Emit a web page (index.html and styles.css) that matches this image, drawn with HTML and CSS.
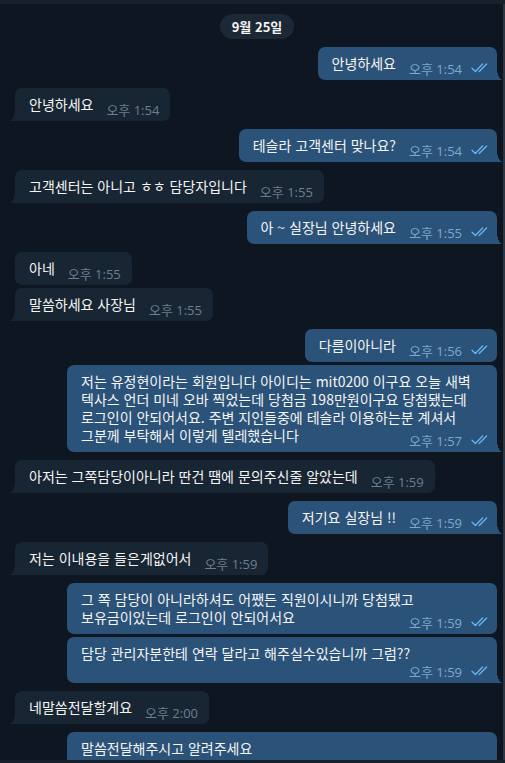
FILE: index.html
```html
<!DOCTYPE html>
<html lang="ko">
<head>
    <meta charset="UTF-8">
    <meta name="viewport" content="width=device-width, initial-scale=1.0">
    <title>Telegram</title>
    <link rel="stylesheet" href="styles.css">
</head>
<body>
    <div class="window">
        <div class="topbar"></div>
        <div class="chat">
            <div class="history">
                <div class="date-row"><span class="date">9월 25일</span></div>

                <div class="group out">
                    <div class="bubble tail">
                        <div class="text">안녕하세요<span class="pad"></span></div>
                        <div class="meta">오후 1:54<svg class="check" width="18" height="10" viewBox="0 0 18 10"><path d="M1 5.2l3.4 3.3L11.6 1M8.2 8.5L15.6 1"/></svg></div>
                    </div>
                </div>

                <div class="group in">
                    <div class="bubble tail">
                        <div class="text">안녕하세요<span class="pad"></span></div>
                        <div class="meta">오후 1:54</div>
                    </div>
                </div>

                <div class="group out">
                    <div class="bubble tail">
                        <div class="text">테슬라 고객센터 맞나요?<span class="pad"></span></div>
                        <div class="meta">오후 1:54<svg class="check" width="18" height="10" viewBox="0 0 18 10"><path d="M1 5.2l3.4 3.3L11.6 1M8.2 8.5L15.6 1"/></svg></div>
                    </div>
                </div>

                <div class="group in">
                    <div class="bubble tail">
                        <div class="text">고객센터는 아니고 ㅎㅎ 담당자입니다<span class="pad"></span></div>
                        <div class="meta">오후 1:55</div>
                    </div>
                </div>

                <div class="group out">
                    <div class="bubble tail">
                        <div class="text">아 ~ 실장님 안녕하세요<span class="pad"></span></div>
                        <div class="meta">오후 1:55<svg class="check" width="18" height="10" viewBox="0 0 18 10"><path d="M1 5.2l3.4 3.3L11.6 1M8.2 8.5L15.6 1"/></svg></div>
                    </div>
                </div>

                <div class="group in">
                    <div class="bubble">
                        <div class="text">아네<span class="pad"></span></div>
                        <div class="meta">오후 1:55</div>
                    </div>
                    <div class="bubble tail">
                        <div class="text">말씀하세요 사장님<span class="pad"></span></div>
                        <div class="meta">오후 1:55</div>
                    </div>
                </div>

                <div class="group out">
                    <div class="bubble">
                        <div class="text">다름이아니라<span class="pad"></span></div>
                        <div class="meta">오후 1:56<svg class="check" width="18" height="10" viewBox="0 0 18 10"><path d="M1 5.2l3.4 3.3L11.6 1M8.2 8.5L15.6 1"/></svg></div>
                    </div>
                    <div class="bubble tail full">
                        <div class="text">저는 유정현이라는 회원입니다 아이디는 mit0200 이구요 오늘 새벽<br>텍사스 언더 미네 오바 찍었는데 당첨금 198만원이구요 당첨됐는데<br>로그인이 안되어서요. 주변 지인들중에 테슬라 이용하는분 계셔서<br>그분께 부탁해서 이렇게 텔레했습니다<span class="pad"></span></div>
                        <div class="meta">오후 1:57<svg class="check" width="18" height="10" viewBox="0 0 18 10"><path d="M1 5.2l3.4 3.3L11.6 1M8.2 8.5L15.6 1"/></svg></div>
                    </div>
                </div>

                <div class="group in">
                    <div class="bubble tail">
                        <div class="text">아저는 그쪽담당이아니라 딴건 땜에 문의주신줄 알았는데<span class="pad"></span></div>
                        <div class="meta">오후 1:59</div>
                    </div>
                </div>

                <div class="group out">
                    <div class="bubble tail">
                        <div class="text">저기요 실장님 !!<span class="pad"></span></div>
                        <div class="meta">오후 1:59<svg class="check" width="18" height="10" viewBox="0 0 18 10"><path d="M1 5.2l3.4 3.3L11.6 1M8.2 8.5L15.6 1"/></svg></div>
                    </div>
                </div>

                <div class="group in">
                    <div class="bubble tail">
                        <div class="text">저는 이내용을 들은게없어서<span class="pad"></span></div>
                        <div class="meta">오후 1:59</div>
                    </div>
                </div>

                <div class="group out">
                    <div class="bubble full">
                        <div class="text">그 쪽 담당이 아니라하셔도 어쨌든 직원이시니까 당첨됐고<br>보유금이있는데 로그인이 안되어서요<span class="pad"></span></div>
                        <div class="meta">오후 1:59<svg class="check" width="18" height="10" viewBox="0 0 18 10"><path d="M1 5.2l3.4 3.3L11.6 1M8.2 8.5L15.6 1"/></svg></div>
                    </div>
                    <div class="bubble tail full stacked">
                        <div class="text">담당 관리자분한테 연락 달라고 해주실수있습니까 그럼??</div>
                        <div class="meta">오후 1:59<svg class="check" width="18" height="10" viewBox="0 0 18 10"><path d="M1 5.2l3.4 3.3L11.6 1M8.2 8.5L15.6 1"/></svg></div>
                    </div>
                </div>

                <div class="group in">
                    <div class="bubble tail">
                        <div class="text">네말씀전달할게요<span class="pad"></span></div>
                        <div class="meta">오후 2:00</div>
                    </div>
                </div>

                <div class="group out">
                    <div class="bubble full">
                        <div class="text">말씀전달해주시고 알려주세요</div>
                    </div>
                </div>
            </div>
        </div>
        <div class="bottombar"></div>
    </div>
</body>
</html>
```

FILE: styles.css
```css
body {
    margin: 0;
    background-color: #0e1621;
    font-family: "Noto Sans CJK KR", "Open Sans", sans-serif;
    font-size: 14px;
    color: #f5f5f5;
}
.window {
    display: flex;
    flex-direction: column;
    height: 763px;
    overflow: hidden;
}
.topbar {
    height: 4px;
    background-color: #17212b;
    flex-shrink: 0;
}
.bottombar {
    height: 3px;
    background-color: #17212b;
    flex-shrink: 0;
}
.chat {
    flex: 1;
    overflow: hidden;
    border-right: 2px solid #2a3644;
}
.history {
    display: flex;
    flex-direction: column;
    gap: 8px;
    padding: 10px 6px 0 15px;
}
.date-row {
    display: flex;
    justify-content: center;
    padding-left: 2px;
}
.date {
    background-color: #1c2835;
    border-radius: 13px;
    padding: 0 12px;
    line-height: 25px;
    font-weight: 600;
    font-size: 13px;
}
.group {
    display: flex;
    flex-direction: column;
    gap: 3px;
}
.group.in {
    align-items: flex-start;
}
.group.out {
    align-items: flex-end;
}
.bubble {
    position: relative;
    display: grid;
    max-width: 430px;
    box-sizing: border-box;
    padding: 7px 11px 8px 14px;
    border-radius: 7px;
    line-height: 18px;
}
.in .bubble {
    background-color: #182533;
}
.out .bubble {
    background-color: #2b5278;
    padding-right: 8px;
}
.bubble.full {
    width: 430px;
}
.text, .meta {
    grid-area: 1 / 1;
}
.text {
    white-space: nowrap;
}
.pad {
    display: inline-block;
    width: 66px;
    height: 1px;
}
.out .pad {
    width: 93px;
}
.meta {
    justify-self: end;
    align-self: end;
    display: flex;
    align-items: center;
    margin-bottom: -5px;
    font-family: "Open Sans", "Noto Sans CJK KR", sans-serif;
    font-size: 13px;
    line-height: 16px;
    color: #6d7f8f;
    white-space: nowrap;
}
.out .meta {
    color: #7da8d3;
}
.stacked .meta {
    grid-area: 2 / 1;
    margin-top: 2px;
}
.check {
    margin-left: 9px;
    margin-top: -3px;
}
.check path {
    fill: none;
    stroke: #64b2f0;
    stroke-width: 1.4;
    stroke-linecap: round;
    stroke-linejoin: round;
}

/* bubble tails */
.bubble.tail::after {
    content: "";
    position: absolute;
    bottom: 0;
    width: 6px;
    height: 11px;
}
.in .bubble.tail {
    border-bottom-left-radius: 0;
}
.in .bubble.tail::after {
    left: -6px;
    background: radial-gradient(ellipse 6px 11px at 0 0, transparent 96%, #182533 100%);
}
.out .bubble.tail {
    border-bottom-right-radius: 0;
}
.out .bubble.tail::after {
    right: -6px;
    background: radial-gradient(ellipse 6px 11px at 100% 0, transparent 96%, #2b5278 100%);
}
```
